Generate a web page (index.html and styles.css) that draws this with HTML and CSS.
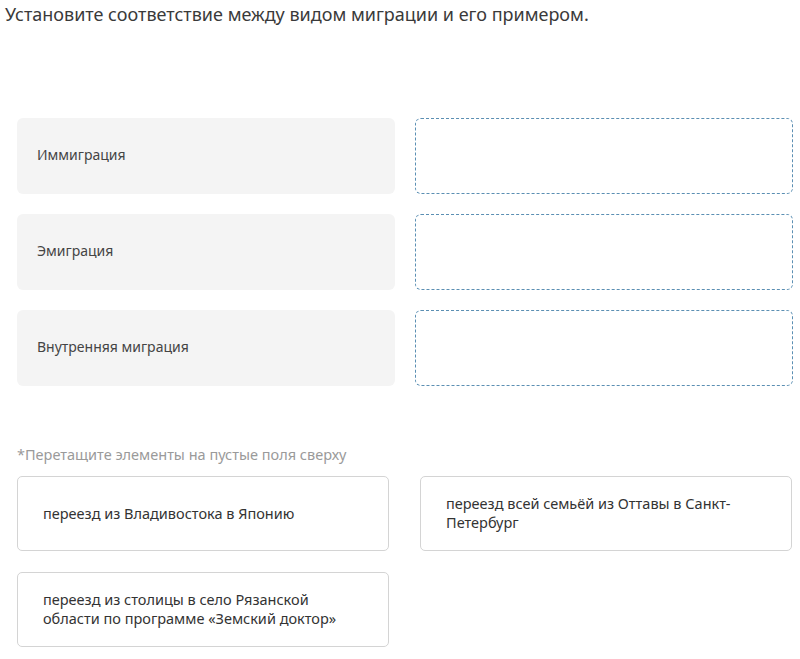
FILE: index.html
```html
<!DOCTYPE html>
<html lang="ru">

<head>
  <meta charset="UTF-8">
  <meta name="viewport" content="width=device-width, initial-scale=1">
  <title>Миграция</title>
  <link rel="stylesheet" href="styles.css">
</head>

<body>

  <h1 class="question">Установите соответствие между видом миграции и его примером.</h1>

  <div class="match">
    <div class="term">Иммиграция</div>
    <div class="slot"></div>
    <div class="term">Эмиграция</div>
    <div class="slot"></div>
    <div class="term">Внутренняя миграция</div>
    <div class="slot"></div>
  </div>

  <p class="hint">*Перетащите элементы на пустые поля сверху</p>

  <div class="options">
    <div class="option" draggable="true">переезд из Владивостока в Японию</div>
    <div class="option" draggable="true">переезд всей семьёй из Оттавы в Санкт-Петербург</div>
    <div class="option" draggable="true">переезд из столицы в село Рязанской области по программе «Земский доктор»</div>
  </div>

</body>

</html>
```

FILE: styles.css
```css
* {
  margin: 0;
  padding: 0;
  box-sizing: border-box;
}

body {
  background: #fff;
  color: #333;
  font-family: 'Noto Sans', 'Open Sans', sans-serif;
  padding: 3px 7px 0 5px;
}

.question {
  font-size: 18px;
  font-weight: normal;
  line-height: 22px;
  color: #3a3a3a;
}

.match {
  display: grid;
  grid-template-columns: 378px 378px;
  column-gap: 20px;
  row-gap: 20px;
  margin: 93px 0 0 12px;
}

.term {
  height: 76px;
  display: flex;
  align-items: center;
  padding: 0 0 3px 20px;
  background: #f4f4f4;
  border-radius: 6px;
  font-size: 14px;
  color: #444;
}

.slot {
  height: 76px;
  border: 1px dashed #5b8fb3;
  border-radius: 6px;
}

.hint {
  margin: 59px 0 0 12px;
  font-size: 14.5px;
  line-height: 18px;
  color: #9a9a9a;
}

.options {
  display: grid;
  grid-template-columns: 372px 372px;
  column-gap: 31px;
  row-gap: 21px;
  margin: 13px 0 0 12px;
}

.option {
  height: 75px;
  display: flex;
  align-items: center;
  padding: 0 25px 1px;
  border: 1px solid #d4d4d4;
  border-radius: 5px;
  font-size: 14.5px;
  line-height: 19px;
  color: #333;
  cursor: grab;
}
```
